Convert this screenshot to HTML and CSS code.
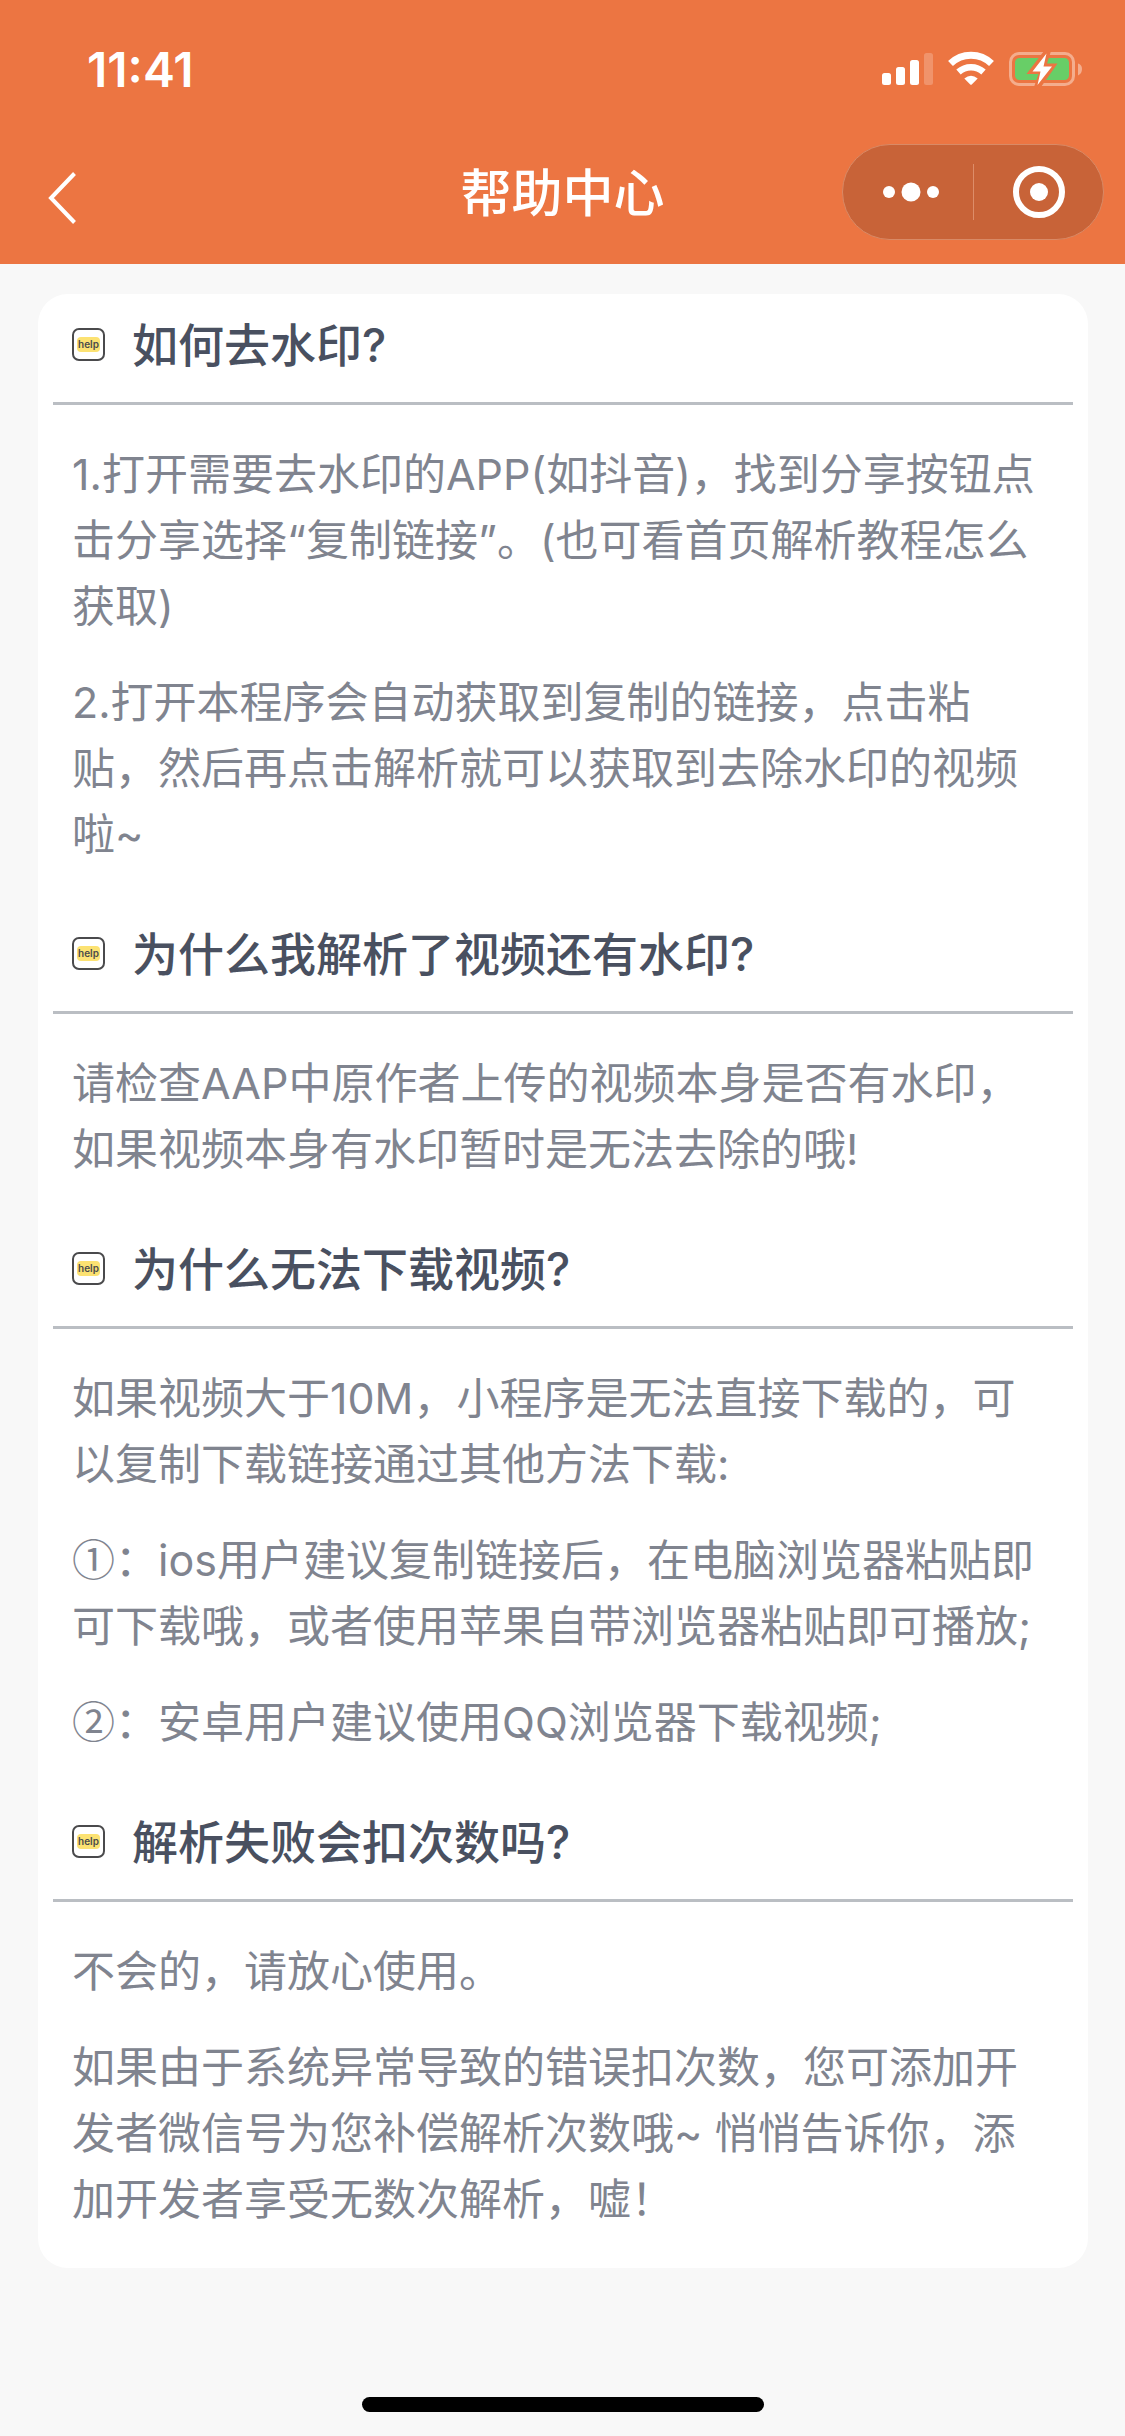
FILE: index.html
```html
<!DOCTYPE html>
<html lang="zh-CN">
<head>
  <meta charset="utf-8">
  <meta name="viewport" content="width=device-width, initial-scale=1">
  <title>帮助中心</title>
  <link rel="stylesheet" href="styles.css">
</head>
<body>
  <header class="header">
    <div class="status">
      <time class="clock">11:41</time>
      <svg class="indicators" width="202" height="38" viewBox="0 0 202 38" role="img" aria-label="信号、无线网络、电池">
        <g fill="#fff">
          <rect x="0" y="23" width="9" height="12" rx="2.5"/>
          <rect x="14" y="17" width="9" height="18" rx="2.5"/>
          <rect x="28" y="10" width="9" height="25" rx="2.5"/>
          <rect x="42" y="3" width="9" height="32" rx="2.5" opacity=".22"/>
        </g>
        <g fill="none" stroke="#fff">
          <path d="M68.500 13.500A29.500 29.500 0 0 1 109.500 13.500" stroke-width="7"/>
          <path d="M76.500 22A18.500 18.500 0 0 1 101.500 22" stroke-width="6.500"/>
        </g>
        <path d="M82.300 28.500Q89 23 95.700 28.500L90 34.300Q89 35.300 88 34.300Z" fill="#fff"/>
        <rect x="128.500" y="3.500" width="63" height="31" rx="8.500" fill="none" stroke="#f4ad8d" stroke-width="3"/>
        <path d="M196 13.500Q200 14.500 200 19T196 25.500Z" fill="#f4ad8d"/>
        <rect x="133" y="8" width="54" height="22" rx="4.500" fill="#68ce67"/>
        <path d="M162 1L144.500 24H156.500L152 37H159L175.500 13.500H165L169 1Z" fill="#ec7542"/>
        <path d="M164.500 3.500L150.500 21.500H158.500L155.500 35L170 16.500H161.500Z" fill="#fff"/>
      </svg>
    </div>
    <nav class="navbar">
      <button class="back" type="button" aria-label="返回">
        <svg width="28" height="52" viewBox="0 0 28 52"><path d="M26.500 1.500L3 26L26.500 50.500" fill="none" stroke="#fff" stroke-width="4"/></svg>
      </button>
      <h1 class="page-title">帮助中心</h1>
      <div class="capsule">
        <button class="capsule-button more" type="button" aria-label="更多">
          <svg width="56" height="20" viewBox="0 0 56 20" fill="#fff"><circle cx="6" cy="10" r="6"/><circle cx="28" cy="10" r="9.500"/><circle cx="50" cy="10" r="6"/></svg>
        </button>
        <button class="capsule-button close" type="button" aria-label="关闭">
          <svg width="52" height="52" viewBox="0 0 52 52"><circle cx="26" cy="26" r="23" fill="none" stroke="#fff" stroke-width="6"/><circle cx="26" cy="26" r="9" fill="#fff"/></svg>
        </button>
      </div>
    </nav>
  </header>

  <main class="card">
    <section>
      <h2 class="question"><span class="icon" aria-hidden="true"><span class="icon-word">help</span></span>如何去水印?</h2>
      <div class="answer">
        <p>1.打开需要去水印的APP(如抖音)，找到分享按钮点击分享选择“复制链接”。(也可看首页解析教程怎么获取)</p>
        <p>2.打开本程序会自动获取到复制的链接，点击粘贴，然后再点击解析就可以获取到去除水印的视频啦~</p>
      </div>
    </section>
    <section>
      <h2 class="question"><span class="icon" aria-hidden="true"><span class="icon-word">help</span></span>为什么我解析了视频还有水印?</h2>
      <div class="answer">
        <p>请检查AAP中原作者上传的视频本身是否有水印，如果视频本身有水印暂时是无法去除的哦!</p>
      </div>
    </section>
    <section>
      <h2 class="question"><span class="icon" aria-hidden="true"><span class="icon-word">help</span></span>为什么无法下载视频?</h2>
      <div class="answer">
        <p>如果视频大于10M，小程序是无法直接下载的，可以复制下载链接通过其他方法下载:</p>
        <p><span class="marker">①：</span>ios用户建议复制链接后，在电脑浏览器粘贴即可下载哦，或者使用苹果自带浏览器粘贴即可播放;</p>
        <p><span class="marker">②：</span>安卓用户建议使用QQ浏览器下载视频;</p>
      </div>
    </section>
    <section>
      <h2 class="question"><span class="icon" aria-hidden="true"><span class="icon-word">help</span></span>解析失败会扣次数吗?</h2>
      <div class="answer">
        <p>不会的，请放心使用。</p>
        <p>如果由于系统异常导致的错误扣次数，您可添加开发者微信号为您补偿解析次数哦~ 悄悄告诉你，添加开发者享受无数次解析，嘘！</p>
      </div>
    </section>
  </main>

  <div class="home-bar"></div>
</body>
</html>
```
FILE: styles.css
```css
* {
  box-sizing: border-box;
}

body {
  display: flex;
  flex-direction: column;
  min-height: 100vh;
  margin: 0;
  background: #f8f8f8;
  color: #80848f;
  font-family: Inter, "Noto Sans CJK SC", sans-serif;
  text-spacing-trim: space-all;
}

h1,
h2,
p {
  margin: 0;
}

button {
  display: flex;
  align-items: center;
  justify-content: center;
  padding: 0;
  border: 0;
  background: none;
}

.header {
  background: #ec7542;
  color: #fff;
}

.status {
  display: flex;
  align-items: center;
  justify-content: space-between;
  height: 138px;
  padding: 0 41px 0 87px;
}

.clock {
  font-size: 48px;
  font-weight: 600;
}

.navbar {
  display: grid;
  grid-template-columns: 1fr auto 1fr;
  align-items: center;
  height: 126px;
  padding: 0 21px 18px;
}

.back {
  justify-self: start;
  padding: 12px 0 0 27px;
}

.page-title {
  padding-top: 3px;
  font-size: 51px;
  font-weight: 500;
  line-height: 72px;
}

.capsule {
  display: grid;
  grid-template-columns: 1fr 1fr;
  justify-self: end;
  width: 262px;
  height: 96px;
  border: 1px solid #d98a66;
  border-radius: 48px;
  background: #c86338;
}

.more {
  padding-left: 6px;
}

.close::before {
  content: "";
  width: 1px;
  height: 56px;
  margin-right: auto;
  background: #dd8d69;
}

.close svg {
  margin-right: auto;
}

.card {
  margin: 30px 37px 0 38px;
  border-radius: 30px;
  background: #fff;
}

.question {
  display: flex;
  align-items: center;
  gap: 27px;
  height: 111px;
  margin: 0 15px;
  padding: 0 19px 7px;
  border-bottom: 3px solid #babec3;
  color: #495060;
  font-size: 46px;
  font-weight: 500;
  line-height: 66px;
}

.icon {
  display: flex;
  align-items: center;
  justify-content: center;
  width: 33px;
  height: 33px;
  border: 2px solid #4a4a4c;
  border-radius: 7px;
}

.icon-word {
  width: 23px;
  border-radius: 4px;
  background: #fce272;
  color: #4a4a4c;
  font-size: 10px;
  font-weight: 600;
  line-height: 15px;
  text-align: center;
}

.answer {
  display: grid;
  gap: 30px;
  padding: 36px 42px 36px 34px;
  font-size: 43px;
  line-height: 66px;
}

.marker {
  font-family: "Noto Sans CJK SC", sans-serif;
  line-height: 1;
}

.home-bar {
  width: 402px;
  height: 15px;
  margin: auto auto 24px;
  border-radius: 8px;
  background: #000;
}
```
